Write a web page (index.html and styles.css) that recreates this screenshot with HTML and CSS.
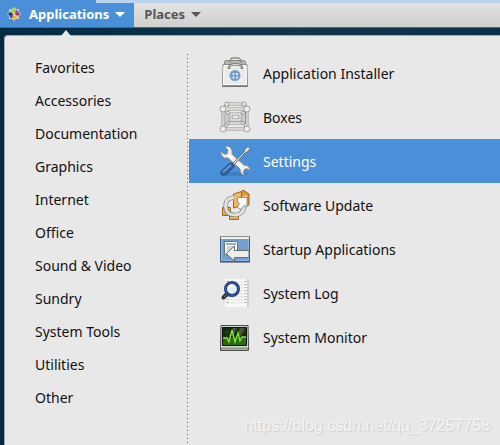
FILE: index.html
```html
<!DOCTYPE html>
<html lang="en">
<head>
<meta charset="utf-8">
<title>Applications</title>
<link rel="stylesheet" href="styles.css">
</head>
<body>
<header class="topbar">
  <div class="strip"></div>
  <nav class="menus">
    <button class="menu menu-active" type="button">
      <svg class="logo" width="14" height="14" viewBox="0 0 14 14" aria-hidden="true">
        <path d="M7 0 9 2h3v3l2 2-2 2v3H9l-2 2-2-2H2V9L0 7l2-2V2h3z" fill="#d9cfc4"/>
        <path d="M7 1 9 3 7 6.500 5 3zM3 3h2l1.500 3.500L3 5z" fill="#a5cf35"/>
        <path d="M9 3h2v2L7.500 6.500zM13 7l-2 2-3.500-2L11 5z" fill="#a32d78"/>
        <path d="M7 13 5 11l2-3.500L9 11zM11 9v2H9L7.500 7.500z" fill="#f4b51c"/>
        <path d="M1 7l2-2 3.500 2L3 9zM3 9l3.500-1.500L5 11H3z" fill="#38266e"/>
        <path d="M3 3l8 8M11 3l-8 8" stroke="#f4f1e8" stroke-width=".4"/>
      </svg>
      <span>Applications</span>
      <span class="caret"></span>
    </button>
    <button class="menu" type="button">
      <span>Places</span>
      <span class="caret"></span>
    </button>
  </nav>
</header>
<main class="desktop">
  <div class="popup">
    <nav class="categories" aria-label="Categories">
      <button type="button">Favorites</button>
      <button type="button">Accessories</button>
      <button type="button">Documentation</button>
      <button type="button">Graphics</button>
      <button type="button">Internet</button>
      <button type="button">Office</button>
      <button type="button">Sound &amp; Video</button>
      <button type="button">Sundry</button>
      <button type="button">System Tools</button>
      <button type="button">Utilities</button>
      <button type="button">Other</button>
    </nav>
    <div class="divider"></div>
    <div class="apps">
      <button type="button">
        <svg width="32" height="32" viewBox="0 0 32 32" aria-hidden="true">
          <path d="M5.500 8V4.500L7 3.500h18l1.500 1V8z" fill="#b5b6b1" stroke="#888a85"/>
          <path d="M11 6q0-5 3-5h5q3 0 3 5" fill="none" stroke="#8f918b" stroke-width="1.500"/>
          <path d="M4 7.500h24l.500 21H3.500z" fill="#ebebe9" stroke="#8b8d87"/>
          <path d="M5 8.500h22l.500 19h-23z" fill="none" stroke="#fff"/>
          <path d="M3 29.500h26" stroke="#777"/>
          <path d="M10 12q0-4 4-4.500h5q4 .500 4 4.500" fill="none" stroke="#777973" stroke-width="2.500"/>
          <path d="M10.500 11q.500-3 3.500-3.500h5q3 .500 3.500 3.500" fill="none" stroke="#d8d9d6"/>
          <circle cx="16" cy="18.500" r="5.500" fill="#729fcf"/>
          <path d="M13.500 16h2v2h-2zM17 16h2v2h-2zM13.500 19.500h2v2h-2zM17 19.500h2v2h-2z" fill="#dfeaf6"/>
        </svg>
        <span>Application Installer</span>
      </button>
      <button type="button">
        <svg width="32" height="32" viewBox="0 0 32 32" aria-hidden="true">
          <g fill="none" stroke="#8f918b" stroke-width="3">
            <path d="M8 3h17v19H8zM4 8h24v20H4zM4 8l4-5M28 8l-3-5M4 28l5-6M28 28l-3-6"/>
            <path d="M12 13h9v6h-9z"/>
          </g>
          <g fill="none" stroke="#efefed" stroke-width="1.300">
            <path d="M8 3h17v19H8zM4 8h24v20H4zM4 8l4-5M28 8l-3-5M4 28l5-6M28 28l-3-6"/>
            <path d="M12 13h9v6h-9z"/>
          </g>
          <g fill="#eeeeec" stroke="#8f918b" stroke-width=".8">
            <circle cx="8" cy="3" r="2"/><circle cx="25" cy="3" r="2"/>
            <circle cx="9" cy="11.500" r="1.500"/><circle cx="24" cy="11.500" r="1.500"/>
            <circle cx="9" cy="22" r="1.500"/><circle cx="24" cy="22" r="1.500"/>
            <circle cx="4" cy="8" r="3"/><circle cx="28" cy="8" r="3"/>
            <circle cx="4" cy="28" r="3"/><circle cx="28" cy="28" r="3"/>
          </g>
        </svg>
        <span>Boxes</span>
      </button>
      <button class="selected" type="button">
        <svg width="32" height="32" viewBox="0 0 32 32" aria-hidden="true">
          <ellipse cx="16" cy="29" rx="13" ry="2" fill="#3f7fc2"/>
          <path d="M6 2 9 5 8 9 5 9 2 6Q1 10 5 13L9 13 21 24Q21 30 26 30L24 27 26 24 29 24 31 26Q31 20 25 20L13 9Q14 3 9 1z" fill="#eeeeec" stroke="#888a85"/>
          <path d="M9 10 24 24" stroke="#fff" stroke-width="1.500"/>
          <path d="M14 18 25 7 26 4 29 1.500 31 3.500 29 6.500 26 8 15 20z" fill="#e4e4e1" stroke="#6c6e69"/>
          <path d="M11 18Q15 18 15 22L7 29.500Q2 32 1.500 27z" fill="#3465a4" stroke="#204a87"/>
          <path d="M4 27 12 20" stroke="#7ca4d6" stroke-width="1.500"/>
        </svg>
        <span>Settings</span>
      </button>
      <button type="button">
        <svg width="32" height="32" viewBox="0 0 32 32" aria-hidden="true">
          <path d="M3.500 18.500h8v8h-8z" fill="#e9ad54" stroke="#a96516"/>
          <path d="M10.500 24.500h9v6h-9z" fill="#edb766" stroke="#a96516"/>
          <path d="M14.500 5l8-2.500v14l-8 2.500z" fill="#edb766" stroke="#a96516"/>
          <path d="M22.500 2.500 24 1l6 4v11l-7 3z" fill="#dc9b40" stroke="#a96516"/>
          <path d="M24 7l4-1v9l-4 2z" fill="#f5cb89"/>
          <path d="M15 8.500Q6.500 9 6.500 17.500 7 26 16 26q8 0 9.500-9" fill="none" stroke="#83857f" stroke-width="4.500"/>
          <path d="M15 8.500Q6.500 9 6.500 17.500 7 26 16 26q8 0 9.500-9" fill="none" stroke="#e1e1de" stroke-width="3"/>
          <path d="M18.500 8.500H28V18l-3-1.500-3 4-3.500-2 2-4-2-1.500z" fill="#fff" stroke="#92948e"/>
        </svg>
        <span>Software Update</span>
      </button>
      <button type="button">
        <svg width="32" height="32" viewBox="0 0 32 32" aria-hidden="true">
          <path d="M1.500 3.500h29v25h-29z" fill="#729fcf" stroke="#365f91"/>
          <path d="M1 3.500h30" stroke="#8b8d87"/>
          <path d="M2 5h28" stroke="#f2f2e8" stroke-width="2"/>
          <path d="M2.500 6v21.500h27V6" fill="none" stroke="#8fb5e0"/>
          <path d="M5.500 8.500h13v13h-13z" fill="#f8f8f7" stroke="#66727c"/>
          <path d="M7 11h10" stroke="#3465a4"/>
          <path d="M8 13h8v5H8z" fill="#d3d4d0"/>
          <path d="M7 20.500 15.500 13v4.500H30v7H15.500V28z" fill="#eeeeec" stroke="#6c6e69"/>
          <path d="M1 29.500h30" stroke="#8a929a"/>
        </svg>
        <span>Startup Applications</span>
      </button>
      <button type="button">
        <svg width="32" height="32" viewBox="0 0 32 32" aria-hidden="true">
          <path d="M6 2h24v28H6z" fill="#d0d0ce"/>
          <path d="M6 2h22v28H6z" fill="#f8f8f8"/>
          <path d="M8 5h17M8 8h17M8 11h17M8 14h17M8 17h17M8 20h17M8 23h17M8 26h17" stroke="#e2e2e0"/>
          <path d="M8.500 4v24M26.500 4v24" stroke="#aaaba8" stroke-width="2" stroke-dasharray="1 2"/>
          <path d="M8 17 4.500 20.500" stroke="#2e3436" stroke-width="4" stroke-linecap="round"/>
          <path d="M8 17 5 20" stroke="#888"/>
          <circle cx="13" cy="12" r="6.500" fill="#e5edf7" stroke="#1c3773" stroke-width="3"/>
          <circle cx="13" cy="12" r="6.500" fill="none" stroke="#4467b3"/>
          <path d="M9.500 11q1-3 4-3" fill="none" stroke="#fff" stroke-width="2"/>
        </svg>
        <span>System Log</span>
      </button>
      <button type="button">
        <svg width="32" height="32" viewBox="0 0 32 32" aria-hidden="true">
          <path d="M2 4.500h27l.500 21v4h-28v-4z" fill="#d3d7cf" stroke="#4b4d49"/>
          <path d="M2 27.500h27" stroke="#8b8d87" stroke-width="2"/>
          <path d="M3.500 6.500h24v18h-24z" fill="#142b0d" stroke="#111"/>
          <path d="M4 16h23v8H4z" fill="#276a12"/>
          <path d="M14 7h4l-4 8h-4zM21 7h5l-4 8h-4z" fill="#4a5148"/>
          <path d="M4 20h23M4 11h23M8 7v17M14 7v17M20 7v17" stroke="#35751f" stroke-width=".4"/>
          <path d="M4 17h4l2 4 3-12 3 12 3-9 2 8 2-4h4" fill="none" stroke="#8ae234" stroke-width="1.300"/>
        </svg>
        <span>System Monitor</span>
      </button>
    </div>
  </div>
  <div class="watermark">https://blog.csdn.net/qq_37257758</div>
</main>
</body>
</html>
```
FILE: styles.css
```css
* {
  box-sizing: border-box;
}

body {
  margin: 0;
  min-height: 100vh;
  display: flex;
  flex-direction: column;
  overflow: hidden;
  font-family: "Noto Sans", sans-serif;
  font-size: 14px;
  color: #111;
}

button {
  margin: 0;
  padding: 0;
  border: 0;
  background: none;
  color: inherit;
  font: inherit;
  text-align: left;
}

.topbar {
  border-bottom: 1px solid #5d6468;
  background: linear-gradient(#e4e4e4, #d0d0d0);
}

.strip {
  height: 3px;
  background: linear-gradient(90deg, #4a90d9 96px, #bdd2ed 96px);
}

.menus {
  display: flex;
}

.menu {
  display: flex;
  align-items: center;
  gap: 5px;
  height: 24px;
  padding: 0 10px 2px;
  color: #555;
  font-size: 13px;
  font-weight: 700;
}

.menu-active {
  padding: 0 9px 2px 7px;
  background: #4a90d9;
  color: #fff;
}

.menu .caret {
  margin-left: 1px;
}

.logo {
  margin-right: 3px;
}

.caret {
  border: 5px solid transparent;
  border-top-color: currentColor;
  border-bottom: 0;
}

.desktop {
  position: relative;
  flex: 1;
  display: flex;
  padding: 7px 0 0 4px;
  background: linear-gradient(90deg, #032b43, #12364c 60%, #0b3148);
}

.popup {
  position: relative;
  flex: 1;
  display: flex;
  padding-top: 15px;
  border: 1px solid #a5a8a9;
  border-width: 1px 0 0 1px;
  border-radius: 4px 0 0 0;
  background: #e8e8e8;
}

.popup::before {
  content: "";
  position: absolute;
  top: -6px;
  left: 56px;
  border: 5px solid transparent;
  border-top: 0;
  border-bottom: 6px solid #e8e8e8;
}

.categories {
  width: 182px;
  display: flex;
  flex-direction: column;
}

.categories button {
  height: 33px;
  padding-left: 30px;
}

.divider {
  width: 1px;
  margin: 3px 1px 0 0;
  background: repeating-linear-gradient(#555 0 1px, transparent 1px 4px);
}

.apps {
  flex: 1;
}

.apps button {
  display: flex;
  align-items: center;
  gap: 12px;
  width: 100%;
  height: 44px;
  padding-left: 30px;
}

.apps .selected {
  background: #4a90d9;
  color: #fff;
}

.watermark {
  position: absolute;
  right: 10px;
  bottom: 9px;
  color: #f4f4f4;
  font-family: "Liberation Sans", sans-serif;
  font-size: 16px;
  line-height: 20px;
  text-shadow: 1px 1px 1px #ccc;
}
```
